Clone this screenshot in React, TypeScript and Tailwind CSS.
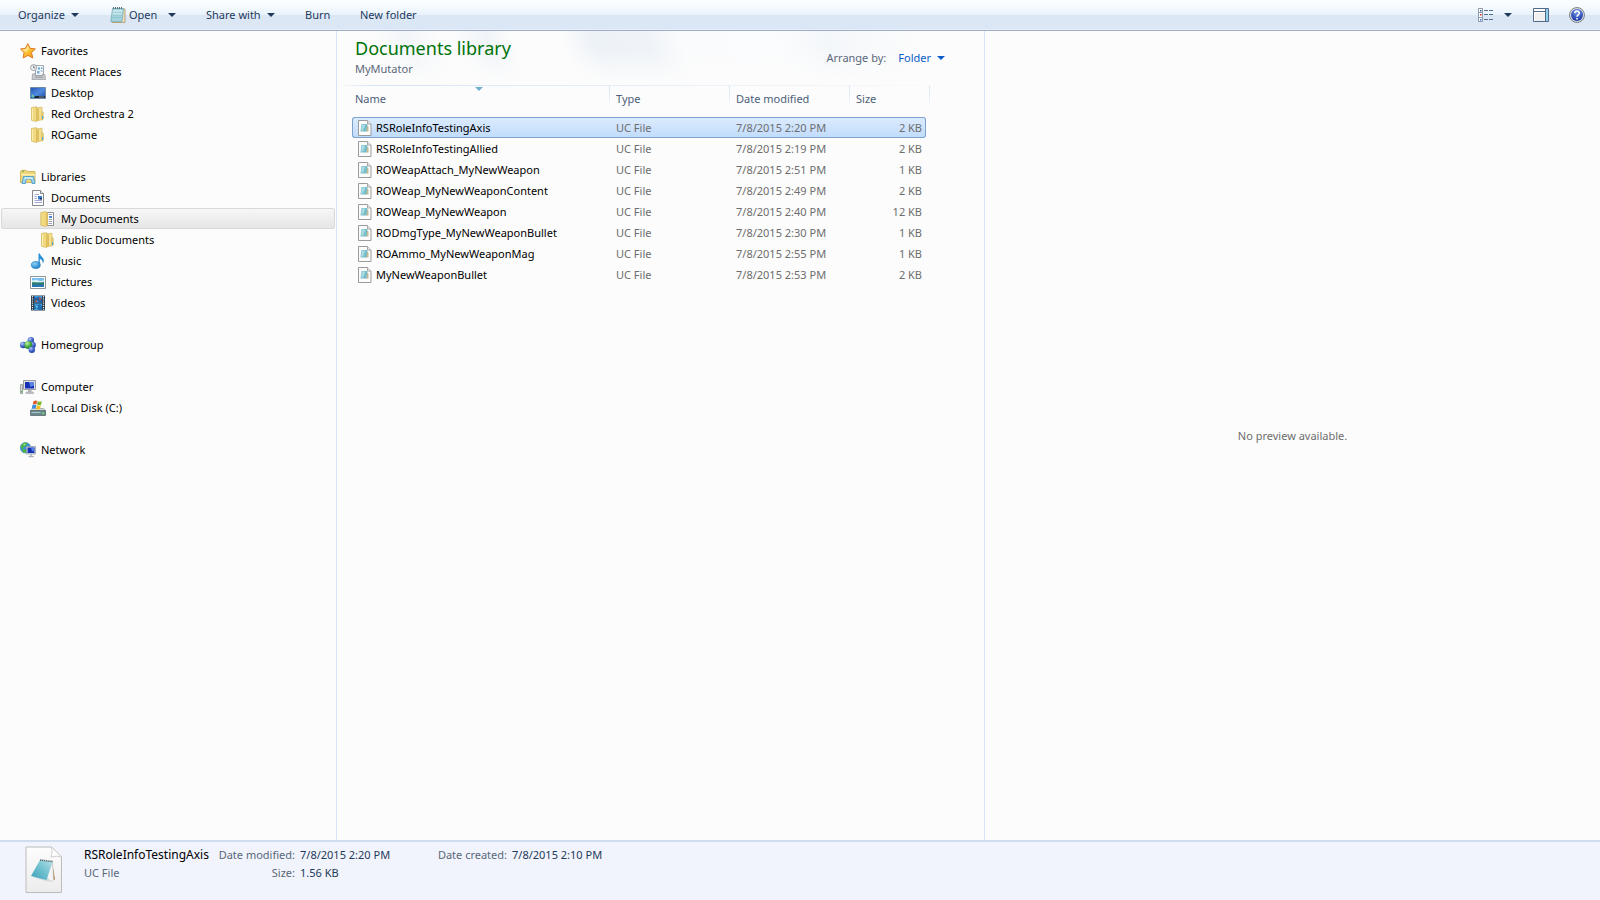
import type { ComponentType } from "react";

const Caret = ({ className = "fill-[#1e395b]" }: { className?: string }) => (
  <svg width="8" height="4" viewBox="0 0 8 4" className={className}>
    <path d="M0 0h8L4 4z" />
  </svg>
);

//: Icons
const Notepad = () => (
  <svg width="16" height="16" viewBox="0 0 16 16">
    <path d="M3 2h12v13.500H2z" fill="#e9dfc2" stroke="#a58b55" strokeWidth=".7" />
    <path d="M2.500 1.500h11L12 14.500H.8z" fill="#a3d3dc" stroke="#6fa9b5" strokeWidth=".7" />
    <path d="M3 3h9.500l-.6 5H2.300z" fill="#c5e6ea" />
    <path d="M2.600 5.500h9.500M2.300 8h9.500M2 10.500h9.500" stroke="#7fbcc9" strokeWidth=".5" />
    <path d="M3.500 0v2M5.500 0v2M7.500 0v2M9.500 0v2M11.500 0v2" stroke="#5d6b72" />
  </svg>
);

const Star = () => (
  <svg width="16" height="16" viewBox="0 0 16 16">
    <defs>
      <linearGradient id="star" x1="0" y1="0" x2="1" y2="1">
        <stop offset="0" stopColor="#ffe98a" />
        <stop offset=".5" stopColor="#fcc231" />
        <stop offset="1" stopColor="#f08d16" />
      </linearGradient>
    </defs>
    <path
      d="M7.800.6l2.300 4.700 5.300.6-3.900 3.700 1.300 5.400-4.900-2.600L3.200 15l.8-5.400L.5 5.900l5-.6z"
      fill="url(#star)"
      stroke="#dd7a2a"
      strokeWidth="1"
      strokeLinejoin="round"
    />
    <path d="M7.800 2.500L9 6.300l-3 3.200-3.500-3 3.600-.4z" fill="#fff3b0" opacity=".6" />
  </svg>
);

const Recent = () => (
  <svg width="16" height="16" viewBox="0 0 16 16">
    <path d="M5.500 1.500h8v10h-8z" fill="#f4f7fa" stroke="#a3a9ae" />
    <path d="M8 3.500h2v2H8zM11 3.500h1.500V5H11z" fill="#58a5d6" />
    <path d="M7 7h2.500v2.500H7zM10.500 6.500h2v1h-2z" fill="#6fb1dc" />
    <path d="M2.500 10l3-.5v2h7V10l2.500.8.500 4.700H2z" fill="#c9cccf" stroke="#94989c" strokeWidth=".7" />
    <path d="M5 12.500h8v1.500H5z" fill="#a4a8ab" />
    <circle cx="3.600" cy="3.600" r="3" fill="#eff3f5" stroke="#9aa0a5" />
    <path d="M3.600 1.800v2h1.600" fill="none" stroke="#53606b" strokeWidth=".8" />
  </svg>
);

const Desktop = () => (
  <svg width="16" height="16" viewBox="0 0 16 16">
    <defs>
      <linearGradient id="desk" x1="0" y1="0" x2="1" y2="1">
        <stop offset="0" stopColor="#2352b0" />
        <stop offset=".5" stopColor="#4f8be0" />
        <stop offset="1" stopColor="#1e4aa3" />
      </linearGradient>
    </defs>
    <path d="M.5 2.500h15v11H.5z" fill="url(#desk)" stroke="#7088a8" />
    <path d="M1 11h14v2H1z" fill="#1c2734" />
    <circle cx="2.800" cy="11.200" r="1.900" fill="#3f9fd8" />
    <path d="M2 10.200h1v1H2z" fill="#f4d34b" />
    <path d="M3 11.200h1v1H3z" fill="#6fd06a" />
    <path d="M9 12h5" stroke="#7c8b9b" />
  </svg>
);

const Folder = () => (
  <svg width="16" height="16" viewBox="0 0 16 16">
    <path d="M1.500 1.500l5-.8v14.800l-5-1.200z" fill="#f1d980" stroke="#d2b45a" strokeWidth=".7" />
    <path d="M2.500 2.500v11" stroke="#fbeeb4" />
    <path d="M6.500 2l5.500-.8v12.600l-5.500 1z" fill="#f5e08e" stroke="#d2b45a" strokeWidth=".7" />
    <path d="M6.500 1v14.500l2.500-1.500V3z" fill="#dfc061" />
    <path d="M12 5.500l1.500 1v6.500l-1.500 1z" fill="#ebd27a" stroke="#cdb05a" strokeWidth=".5" />
    <path d="M12.500 10v3" stroke="#4aa8dc" />
  </svg>
);

const FolderDocs = () => (
  <svg width="16" height="16" viewBox="0 0 16 16">
    <path d="M7 1.500h6.500v13H7z" fill="#fdfdfd" stroke="#8c8f93" />
    <path d="M8.500 3.500H12M8.500 8.500H12M8.500 10.500H12M8.500 12.500H12" stroke="#9aa4b5" />
    <path d="M9 5h3v2H9z" fill="#4a87d3" />
    <path d="M.8 1.500l5-.8 1.700 1v12.300l-1.700 1.500-5-1.200z" fill="#f1d980" stroke="#d2b45a" strokeWidth=".7" />
    <path d="M5.800 1v14.300l1.700-1.300V2z" fill="#dfc061" />
  </svg>
);

const Libraries = () => (
  <svg width="16" height="16" viewBox="0 0 16 16">
    <path d="M.5 2.500l1-1.200h4.500l1 1.200h8v11H.5z" fill="#f0d67a" stroke="#c9a94c" strokeWidth=".8" />
    <path d="M1 5h14v1.500H1z" fill="#fbeeb0" />
    <path d="M2 2.500h2" stroke="#66b54a" />
    <path
      d="M3.500 7.500h10l1.500 7h-3v-1.500a3.200 3.200 0 0 0-6.500 0v1.500h-3.500z"
      fill="#9ed7f2"
      stroke="#3f94c9"
      strokeWidth=".8"
    />
    <path d="M4.500 8.500h8v1.200h-8z" fill="#e0f4fd" />
  </svg>
);

const Documents = () => (
  <svg width="16" height="16" viewBox="0 0 16 16">
    <path d="M2.500.5h8l3 3v12h-11z" fill="#fff" stroke="#83878c" />
    <path d="M10.500.5v3h3" fill="#e5e7ea" stroke="#83878c" />
    <path d="M4.500 4.500H9M4.500 6.500h2.500M4.500 8.500h2.500M4.500 10.500H12M4.500 12.500H12" stroke="#a3a8d4" />
    <path d="M8 6h4v3.500H8z" fill="#3a7cc9" />
    <path d="M10 8h2v1.500h-2z" fill="#17355e" />
  </svg>
);

const Music = () => (
  <svg width="16" height="16" viewBox="0 0 16 16">
    <defs>
      <radialGradient id="note" cx=".35" cy=".3" r=".8">
        <stop offset="0" stopColor="#8bd2f6" />
        <stop offset="1" stopColor="#1377c4" />
      </radialGradient>
    </defs>
    <path d="M8.500.5h1.300c.4 3 4.700 3.700 4 8-.2 1-.7 1.700-1.200 2 .5-2.600-.6-4-2.800-4.600v6H8.500z" fill="#2b90d6" />
    <ellipse cx="5.800" cy="12" rx="4.500" ry="3.500" fill="url(#note)" stroke="#1b75b8" strokeWidth=".6" />
  </svg>
);

const Pictures = () => (
  <svg width="16" height="16" viewBox="0 0 16 16">
    <path d="M.5 2.500h15v12H.5z" fill="#fff" stroke="#8f9499" />
    <path d="M2 4h12v9H2z" fill="#78bdec" />
    <path d="M2 6.500l4-1 4 1.500 4-.5v2H2z" fill="#d5effa" />
    <path d="M2 8.500c3-1 5 1 12-.5V11H2z" fill="#2e7d62" />
    <path d="M2 10.500h12V13H2z" fill="#2676b8" />
  </svg>
);

const Videos = () => (
  <svg width="16" height="16" viewBox="0 0 16 16">
    <path d="M1 .5h14v15H1z" fill="#2b3946" />
    <path d="M4 1h8v6.500H4zM4 8.500h8V15H4z" fill="#3f9ee0" />
    <path d="M4 1l2.500 2L9 1.500 12 4v3.500H9L7 5 4 7.500z" fill="#275f9e" />
    <path d="M9 2.500h2v2H9zM5 5.500h2v1.500H5z" fill="#c5573f" />
    <path d="M4 9l3 1.500 3-1.500 2 3v3H9L6 13l-2 2z" fill="#1f6dad" />
    <path d="M5 10l3 1.500-1 2z" fill="#82cdf5" />
    <path d="M2.500 1v14M13.500 1v14" stroke="#e6ecef" strokeWidth="1.200" strokeDasharray="1.200 1" />
  </svg>
);

const Homegroup = () => (
  <svg width="16" height="16" viewBox="0 0 16 16">
    <defs>
      <radialGradient id="orb" cx=".35" cy=".3" r=".8">
        <stop offset="0" stopColor="#b5cdf8" />
        <stop offset=".5" stopColor="#4468cc" />
        <stop offset="1" stopColor="#1d3a96" />
      </radialGradient>
      <radialGradient id="orbGreen" cx=".35" cy=".3" r=".8">
        <stop offset="0" stopColor="#bff0a4" />
        <stop offset=".6" stopColor="#3da53c" />
        <stop offset="1" stopColor="#16702b" />
      </radialGradient>
    </defs>
    <circle cx="10.800" cy="3.300" r="3.200" fill="url(#orb)" />
    <circle cx="3.200" cy="8" r="3.200" fill="url(#orb)" />
    <circle cx="12.600" cy="8" r="3.200" fill="url(#orb)" />
    <circle cx="8.300" cy="8" r="4" fill="url(#orbGreen)" />
    <circle cx="11.800" cy="12.700" r="3.200" fill="url(#orb)" />
  </svg>
);

const Computer = () => (
  <svg width="16" height="16" viewBox="0 0 16 16">
    <path d="M.5 5.500h2v9h-2z" fill="#d6d9d8" stroke="#8e9493" strokeWidth=".8" />
    <path d="M1 12h1.500v1.500H1z" fill="#58b947" />
    <path d="M3.500 1.500h12v9h-12z" fill="#dfe1e3" stroke="#9a9ea3" />
    <path d="M5 3h9v6.500H5z" fill="#1630b4" />
    <path d="M9 3h5v3.500L10.500 8z" fill="#5a86ea" />
    <path d="M8 11h3.500v2H8z" fill="#b3b7bb" />
    <path d="M6 13h7.500v1.500H6z" fill="#c4c7ca" stroke="#979ba0" strokeWidth=".5" />
  </svg>
);

const Disk = () => (
  <svg width="16" height="16" viewBox="0 0 16 16">
    <path d="M2.500 8.500h11l2 2.500H.5z" fill="#d8dcdd" stroke="#8e9596" strokeWidth=".7" />
    <path d="M.5 10.500h15v5H.5z" fill="#69888f" stroke="#5b6a6d" strokeWidth=".8" />
    <path d="M1.500 12h9v1h-9z" fill="#a8c6ca" />
    <path d="M12 12.500h2v1.500h-2z" fill="#6fe06a" />
    <path d="M3.500 1.200Q5.500-.2 7.200.9L6.500 4.300Q4.800 3.400 2.700 4.500z" fill="#e2572b" />
    <path d="M7.600 1.200q2.200 1 4.200.1L11 4.900q-2 .8-4-.2z" fill="#77b82f" />
    <path d="M2.500 5.100q2-1.100 3.900-.2L5.600 8.700Q4 7.900 1.600 8.900z" fill="#3a8ee0" />
    <path d="M6.900 5.300q2 1 3.900.2L10 9.300q-2 .7-4-.2z" fill="#f6bf22" />
  </svg>
);

const Network = () => (
  <svg width="16" height="16" viewBox="0 0 16 16">
    <circle cx="5.500" cy="5.800" r="5.200" fill="#3d8fd8" stroke="#2b6db1" strokeWidth=".5" />
    <path d="M3 1.500Q5 0 7.500 1L6 4 3.500 5 2.500 8 .7 5Q1 3 3 1.500zM4 7l2 1v2.500L4.500 11Q2 10 2 8.500z" fill="#4cb744" />
    <path d="M3 2.500l2.500-1-1 2z" fill="#c5efb0" />
    <path d="M6.500 4.500h9v7.500h-9z" fill="#dfe3e8" stroke="#8e959e" strokeWidth=".7" />
    <path d="M7.500 5.500h7V11h-7z" fill="#1630b4" />
    <path d="M11 5.500h3.500v3L12 9.500z" fill="#4f7ee6" />
    <path d="M10.300 12h1.500v2h2v1.300H8.500V14h1.800z" fill="#a9b3bf" />
  </svg>
);

const UcFile = () => (
  <svg width="14" height="16" viewBox="0 0 14 16" className="shrink-0">
    <path d="M.5.5h9l3.500 3.500v11.500H.5z" fill="#fcfcfc" stroke="#9b9b9b" />
    <path d="M9.500.5V4H13" fill="#ececec" stroke="#a8a8a8" />
    <path d="M9 5.500l1.500 1v5H8z" fill="#c9b78f" />
    <path d="M3.500 4h6l-1 7.500H2.500z" fill="#77bcc9" />
    <path d="M4 4.500h3.500L5 10.500H3.200z" fill="#a9dbe2" />
  </svg>
);

const UcFileLarge = () => (
  <svg width="38" height="48" viewBox="0 0 38 48">
    <defs>
      <linearGradient id="page" x1="0" y1="0" x2="0" y2="1">
        <stop offset="0" stopColor="#fdfdfd" />
        <stop offset="1" stopColor="#ececec" />
      </linearGradient>
      <linearGradient id="pad" x1="0" y1="1" x2="1" y2="0">
        <stop offset="0" stopColor="#3a9db4" />
        <stop offset=".5" stopColor="#6fc0d0" />
        <stop offset="1" stopColor="#b5e1e8" />
      </linearGradient>
    </defs>
    <path d="M1 1h25.500L36.500 11v35.500H1z" fill="url(#page)" stroke="#bcbcbc" />
    <path d="M26.500 1c1 4 .5 7-.5 10 4-1 7-1 10.500 0z" fill="#fff" stroke="#c4c4c4" strokeWidth=".8" />
    <path d="M27 15l3 18.500-3 1z" fill="#b0824a" />
    <path d="M27.500 15l1 19-2.500 1.500-5-1.500z" fill="#f2f4f6" stroke="#b4bcc3" strokeWidth=".5" />
    <path d="M7 31l8 2.500 7 2 4 0-3-4z" fill="#d5dde3" />
    <path d="M15 14l12.500 1.500L21.500 34 6 30z" fill="url(#pad)" />
    <path d="M15 14l12.500 1.500" stroke="#58636a" strokeWidth="1.500" strokeDasharray="1.200 .7" />
  </svg>
);

const ViewModes = () => (
  <svg width="16" height="14" viewBox="0 0 16 14">
    <path d="M.5.5h4v13h-4z" fill="#fff" stroke="#8a9bb0" />
    <path d="M.5 4.500h4M.5 9.500h4" stroke="#8a9bb0" />
    <path d="M2 2h1.500v1.500H2z" fill="#3c5d86" />
    <path d="M2 6h1.500v1.500H2z" fill="#d9281e" />
    <path d="M2 11h1.500v1.500H2z" fill="#3b76c4" />
    <path d="M6 2.500h4M11 2.500h4M6 6.500h4M11 6.500h4M6 11.500h4M11 11.500h4" stroke="#56708f" />
  </svg>
);

const PreviewPane = () => (
  <svg width="16" height="14" viewBox="0 0 16 14">
    <path d="M.5.5h15v13H.5z" fill="#fff" stroke="#52698a" />
    <path d="M1 3.500h12" stroke="#52698a" />
    <path d="M13 1h2v12h-2z" fill="#8fd0ea" />
    <path d="M12.500 1v12" stroke="#52698a" />
    <path d="M2 5h10v8H2z" fill="#f0f0f0" />
  </svg>
);

const Help = () => (
  <svg width="16" height="16" viewBox="0 0 16 16">
    <defs>
      <radialGradient id="help" cx=".5" cy=".25" r=".8">
        <stop offset="0" stopColor="#6f97ea" />
        <stop offset="1" stopColor="#15309c" />
      </radialGradient>
    </defs>
    <circle cx="8" cy="8" r="7.500" fill="#d7dade" stroke="#777b80" strokeWidth=".9" />
    <circle cx="8" cy="8" r="6" fill="url(#help)" />
    <path d="M5.700 6.300C5.800 3.400 10.400 3.500 10.300 6.200 10.200 7.800 8 7.900 8 9.700" fill="none" stroke="#fff" strokeWidth="1.600" />
    <path d="M7.200 10.900h1.600v1.600H7.200z" fill="#fff" />
  </svg>
);

type NavItem = { label: string; icon: ComponentType; pad: string; selected?: boolean };

const navGroups: NavItem[][] = [
  [
    { label: "Favorites", icon: Star, pad: "pl-[19px]" },
    { label: "Recent Places", icon: Recent, pad: "pl-[29px]" },
    { label: "Desktop", icon: Desktop, pad: "pl-[29px]" },
    { label: "Red Orchestra 2", icon: Folder, pad: "pl-[29px]" },
    { label: "ROGame", icon: Folder, pad: "pl-[29px]" },
  ],
  [
    { label: "Libraries", icon: Libraries, pad: "pl-[19px]" },
    { label: "Documents", icon: Documents, pad: "pl-[29px]" },
    { label: "My Documents", icon: FolderDocs, pad: "pl-[39px]", selected: true },
    { label: "Public Documents", icon: Folder, pad: "pl-[39px]" },
    { label: "Music", icon: Music, pad: "pl-[29px]" },
    { label: "Pictures", icon: Pictures, pad: "pl-[29px]" },
    { label: "Videos", icon: Videos, pad: "pl-[29px]" },
  ],
  [{ label: "Homegroup", icon: Homegroup, pad: "pl-[19px]" }],
  [
    { label: "Computer", icon: Computer, pad: "pl-[19px]" },
    { label: "Local Disk (C:)", icon: Disk, pad: "pl-[29px]" },
  ],
  [{ label: "Network", icon: Network, pad: "pl-[19px]" }],
];

const files = [
  { name: "RSRoleInfoTestingAxis", date: "7/8/2015 2:20 PM", size: "2 KB" },
  { name: "RSRoleInfoTestingAllied", date: "7/8/2015 2:19 PM", size: "2 KB" },
  { name: "ROWeapAttach_MyNewWeapon", date: "7/8/2015 2:51 PM", size: "1 KB" },
  { name: "ROWeap_MyNewWeaponContent", date: "7/8/2015 2:49 PM", size: "2 KB" },
  { name: "ROWeap_MyNewWeapon", date: "7/8/2015 2:40 PM", size: "12 KB" },
  { name: "RODmgType_MyNewWeaponBullet", date: "7/8/2015 2:30 PM", size: "1 KB" },
  { name: "ROAmmo_MyNewWeaponMag", date: "7/8/2015 2:55 PM", size: "1 KB" },
  { name: "MyNewWeaponBullet", date: "7/8/2015 2:53 PM", size: "2 KB" },
];

const Toolbar = () => (
  <header className="flex h-[31px] shrink-0 items-center border-b border-[#a0afc7] bg-linear-to-b from-[#fafdff] from-10% via-[#e9f3fc] via-49% to-[#dce7f5] to-50% pr-[15px] pl-[18px] text-[#1e395b] shadow-[inset_0_-1px_0_#e6eff9]">
    <button className="flex w-[92px] items-center gap-1.5">
      Organize <Caret />
    </button>
    <button className="flex w-[58px] items-center gap-[3px]">
      <Notepad /> Open
    </button>
    <button aria-label="Open with" className="flex w-[38px] items-center">
      <Caret />
    </button>
    <button className="flex w-[99px] items-center gap-1.5">
      Share with <Caret />
    </button>
    <button className="w-[55px] text-left">Burn</button>
    <button>New folder</button>
    <div className="ml-auto flex items-center">
      <button aria-label="Change your view" className="mr-2.5">
        <ViewModes />
      </button>
      <button aria-label="More view options" className="mr-[21px]">
        <Caret />
      </button>
      <button aria-label="Show the preview pane" className="mr-5">
        <PreviewPane />
      </button>
      <button aria-label="Get help">
        <Help />
      </button>
    </div>
  </header>
);

const Sidebar = () => (
  <nav className="flex w-[337px] shrink-0 flex-col gap-[21px] border-r border-[#d6e5f5] px-px pt-[9px] text-black">
    {navGroups.map((group) => (
      <ul key={group[0].label}>
        {group.map(({ label, icon: Icon, pad, selected }) => (
          <li key={label}>
            <a
              href="#"
              className={`flex h-[21px] items-center gap-[5px] ${pad} ${
                selected
                  ? "rounded-[3px] bg-linear-to-b from-[#f8f8f8] to-[#e5e5e5] shadow-[inset_0_0_0_1px_#d9d9d9]"
                  : ""
              }`}
            >
              <Icon />
              {label}
            </a>
          </li>
        ))}
      </ul>
    ))}
  </nav>
);

const headCell =
  "bg-[linear-gradient(#d6e5f5,#e8f0f9_60%,#fcfcfc)] bg-[length:1px_22px] bg-right-top bg-no-repeat pt-0 pb-[5px] text-left font-normal";

const FileList = () => (
  <main className="w-[648px] shrink-0 border-r border-[#d6e5f5]">
    <div className="flex h-[54px] justify-between bg-[linear-gradient(to_bottom,#fcfcfc00_35%,#fcfcfc_95%),linear-gradient(70deg,#fcfcfc_8%,#f2f5f9_13%,#fcfcfc_18%,#fcfcfc_20%,#f0f4f9_25%,#fcfcfc_29%,#fcfcfc_36%,#edf2f8_41%,#eff3f8_49%,#fafbfc_54%,#fbfcfd_68%,#f4f7fa_76%,#fcfcfc_90%)] pr-[39px] pl-[18px]">
      <div className="pt-[3px]">
        <h1 className="text-[18px] leading-7 text-[#00730a]">Documents library</h1>
        <p className="leading-[14px] text-[#5a6779]">MyMutator</p>
      </div>
      <div className="flex items-center gap-3 text-[#5a6779]">
        Arrange by:
        <button className="flex items-center gap-1.5 text-[#0b5cc8]">
          Folder <Caret className="fill-[#0b5cc8]" />
        </button>
      </div>
    </div>
    <div className="h-px bg-linear-to-r from-transparent via-[#d6e5f5] via-5% to-transparent" />
    <div className="pl-[15px]">
      <table className="w-[578px] table-fixed border-separate border-spacing-0 text-[#6d6d6d]">
        <colgroup>
          <col className="w-[258px]" />
          <col className="w-[120px]" />
          <col className="w-[120px]" />
          <col className="w-[76px]" />
          <col className="w-1" />
        </colgroup>
        <thead>
          <tr className="h-[31px] text-[#4c607a]">
            <th scope="col" aria-sort="descending" className={`${headCell} relative pl-[3px]`}>
              Name
              <Caret className="absolute top-px left-[123px] fill-[#6fb0d0]" />
            </th>
            <th scope="col" className={`${headCell} pl-1.5`}>Type</th>
            <th scope="col" className={`${headCell} pl-1.5`}>Date modified</th>
            <th scope="col" colSpan={2} className={`${headCell} pl-1.5`}>Size</th>
          </tr>
        </thead>
        <tbody>
          {files.map((file, i) => {
            const fill =
              i === 0
                ? "border-[#7da2ce] bg-linear-to-b from-[#dcebfd] to-[#c1dcfc]"
                : "border-transparent";
            return (
              <tr key={file.name} className="h-[21px]">
                <td className={`${fill} rounded-l-[3px] border-y border-l p-0`}>
                  <span className="flex items-center gap-1 pl-[5px] leading-4 text-black">
                    <UcFile />
                    {file.name}
                  </span>
                </td>
                <td className={`${fill} border-y py-0 pr-0 pl-1.5 leading-4`}>UC File</td>
                <td className={`${fill} border-y py-0 pr-0 pl-1.5 leading-4`}>{file.date}</td>
                <td className={`${fill} rounded-r-[3px] border-y border-r py-0 pr-[3px] text-right leading-4`}>
                  {file.size}
                </td>
              </tr>
            );
          })}
        </tbody>
      </table>
    </div>
  </main>
);

const Details = () => (
  <footer className="flex h-[60px] shrink-0 border-t-2 border-[#cfdcee] bg-[#f1f4fc] pt-1 pl-[25px] leading-[18px] text-[#5a6779]">
    <UcFileLarge />
    <div className="w-[134px] pl-[21px]">
      <p className="text-xs leading-[18px] text-black">RSRoleInfoTestingAxis</p>
      <p>UC File</p>
    </div>
    <dl className="grid h-9 grid-cols-[98px_128px_74px_auto] gap-x-[5px] whitespace-nowrap">
      <dt className="text-right">Date modified:</dt>
      <dd className="text-[#1e395b]">7/8/2015 2:20 PM</dd>
      <dt className="text-right">Date created:</dt>
      <dd className="text-[#1e395b]">7/8/2015 2:10 PM</dd>
      <dt className="text-right">Size:</dt>
      <dd className="text-[#1e395b]">1.56 KB</dd>
    </dl>
  </footer>
);

export default function App() {
  return (
    <div className="flex min-h-screen flex-col bg-[#fcfcfc] font-['Noto_Sans','Open_Sans',sans-serif] text-[11px] leading-4">
      <Toolbar />
      <div className="flex flex-1">
        <Sidebar />
        <FileList />
        <aside className="flex flex-1 items-center justify-center text-[#6d6d6d]">No preview available.</aside>
      </div>
      <Details />
    </div>
  );
}
